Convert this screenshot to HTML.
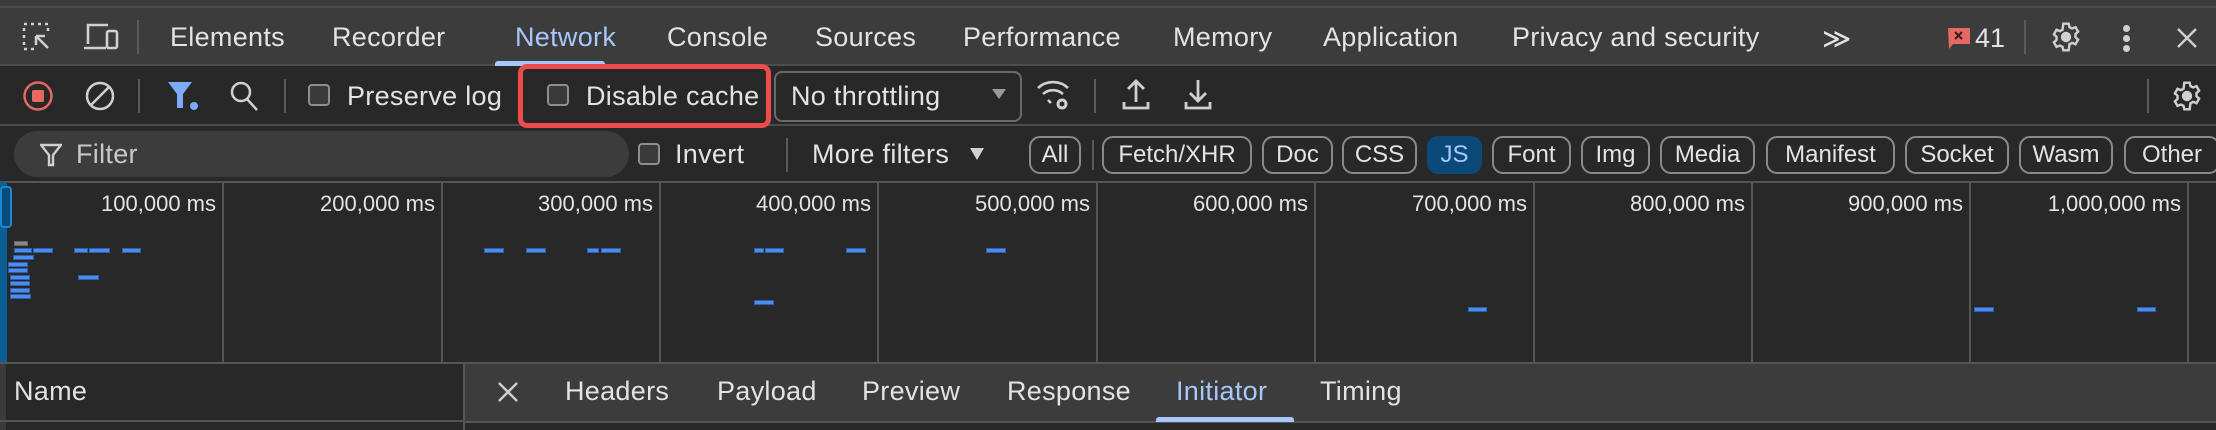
<!DOCTYPE html>
<html><head><meta charset="utf-8"><style>
*{margin:0;padding:0;box-sizing:border-box}
body{width:2216px;height:430px;background:#282828;font-family:"Liberation Sans",Arial,sans-serif;color:#e3e3e3;position:relative;overflow:hidden}
.a{position:absolute;white-space:nowrap}
.t{font-size:27px;top:22px;letter-spacing:0.3px}
.f{font-size:27px;letter-spacing:0.3px}
.cb{position:absolute;width:22px;height:22px;border:2px solid #8e8e8e;border-radius:4px;background:#3a3a3a}
.sep{position:absolute;width:2px;background:#5a5a5a}
.pill{position:absolute;top:136px;height:38px;border:2px solid #8a8a8a;border-radius:11px;font-size:24px;line-height:34px;text-align:center;color:#e3e3e3}
.lab{position:absolute;top:191px;font-size:22px;text-align:right;width:220px}
.g{position:absolute;top:182px;height:181px;width:2px;background:#555}
.b{position:absolute;height:5px;background:#4d8cf0;border:1px solid #2f5fa8}
</style></head><body>
<div class="a" style="left:0;top:0;width:2216px;height:66px;background:#3c3c3c"></div>
<div class="a" style="left:0;top:6px;width:2216px;height:2px;background:#4c4c4c"></div>
<div class="a" style="left:0;top:64px;width:2216px;height:2px;background:#4c4c4c"></div>
<svg class="a" style="left:22px;top:22px" width="32" height="32" viewBox="0 0 32 32" fill="none" stroke="#d0d0d0" stroke-width="2.5"><path d="M2 2h3M9 2h3M16 2h3M23 2h3M2 6v3M2 13v3M2 20v3M26 6v3M2 27h3M9 27h3" /><path d="M14 14l12 12M14 14v9M14 14h9"/></svg>
<svg class="a" style="left:82px;top:22px" width="38" height="30" viewBox="0 0 38 30" fill="none" stroke="#d0d0d0" stroke-width="2.6"><path d="M6 22V3h20M2 26h22"/><rect x="25" y="9" width="10" height="17" rx="2"/></svg>
<div class="sep" style="left:137px;top:20px;height:34px"></div>
<div class="a t" style="left:170px">Elements</div>
<div class="a t" style="left:332px">Recorder</div>
<div class="a t" style="left:515px;color:#a8c7fa">Network</div>
<div class="a" style="left:495px;top:61px;width:110px;height:5px;background:#a8c7fa;border-radius:3px 3px 0 0"></div>
<div class="a t" style="left:667px">Console</div>
<div class="a t" style="left:815px">Sources</div>
<div class="a t" style="left:963px">Performance</div>
<div class="a t" style="left:1173px">Memory</div>
<div class="a t" style="left:1323px">Application</div>
<div class="a t" style="left:1512px">Privacy and security</div>
<div class="a t" style="left:1822px;font-size:28px">&#8811;</div>
<svg class="a" style="left:1948px;top:28px" width="24" height="22" viewBox="0 0 24 22"><path d="M0 0h22v16H5l-4 5z" fill="#e46962"/><path d="M7 4l7 7M14 4l-7 7" stroke="#3a1a1a" stroke-width="2"/></svg>
<div class="a" style="left:1975px;top:23px;font-size:27px">41</div>
<div class="sep" style="left:2024px;top:20px;height:34px"></div>
<svg class="a" style="left:2050px;top:21px" width="32" height="32" viewBox="0 0 24 24" fill="none" stroke="#d0d0d0" stroke-width="1.8"><path d="M10 2h4l.6 2.6 2 1 2.5-1 2 3.4-2 1.8v2.4l2 1.8-2 3.4-2.5-1-2 1L14 22h-4l-.6-2.6-2-1-2.5 1-2-3.4 2-1.8V11.8l-2-1.8 2-3.4 2.5 1 2-1z"/><circle cx="12" cy="12" r="3" fill="#d0d0d0"/></svg>
<div class="a" style="left:2123px;top:25px;width:7px;height:7px;border-radius:4px;background:#d0d0d0"></div>
<div class="a" style="left:2123px;top:35px;width:7px;height:7px;border-radius:4px;background:#d0d0d0"></div>
<div class="a" style="left:2123px;top:45px;width:7px;height:7px;border-radius:4px;background:#d0d0d0"></div>
<svg class="a" style="left:2176px;top:27px" width="22" height="22" viewBox="0 0 22 22" stroke="#d0d0d0" stroke-width="2.4"><path d="M2 2l18 18M20 2L2 20"/></svg>
<div class="a" style="left:0;top:124px;width:2216px;height:2px;background:#4c4c4c"></div>
<svg class="a" style="left:22px;top:80px" width="32" height="32" viewBox="0 0 32 32"><circle cx="16" cy="16" r="13.5" fill="none" stroke="#e46962" stroke-width="2.5"/><rect x="10" y="10" width="12" height="12" rx="1.5" fill="#e46962"/></svg>
<svg class="a" style="left:84px;top:80px" width="32" height="32" viewBox="0 0 32 32" fill="none" stroke="#d0d0d0" stroke-width="2.5"><circle cx="16" cy="16" r="13"/><path d="M7 25L25 7"/></svg>
<div class="sep" style="left:138px;top:79px;height:34px"></div>
<svg class="a" style="left:167px;top:80px" width="34" height="32" viewBox="0 0 34 32"><path d="M1 2h24l-9 12v14h-6V14z" fill="#7cacf8"/><circle cx="27" cy="26" r="4" fill="#7cacf8"/></svg>
<svg class="a" style="left:229px;top:80px" width="30" height="32" viewBox="0 0 30 32" fill="none" stroke="#d0d0d0" stroke-width="2.5"><circle cx="12" cy="12" r="9"/><path d="M18 19l10 11"/></svg>
<div class="sep" style="left:284px;top:79px;height:34px"></div>
<div class="cb" style="left:308px;top:84px"></div>
<div class="a f" style="left:347px;top:81px">Preserve log</div>
<div class="a" style="left:518px;top:64px;width:253px;height:64px;border:5px solid #ee4c4c;border-radius:9px"></div>
<div class="cb" style="left:547px;top:84px"></div>
<div class="a f" style="left:586px;top:81px">Disable cache</div>
<div class="a" style="left:774px;top:71px;width:248px;height:51px;border:2px solid #6a6a6a;border-radius:8px"></div>
<div class="a f" style="left:791px;top:81px">No throttling</div>
<div class="a" style="left:992px;top:89px;width:0;height:0;border-left:7px solid transparent;border-right:7px solid transparent;border-top:10px solid #9a9a9a"></div>
<svg class="a" style="left:1036px;top:78px" width="36" height="34" viewBox="0 0 36 34" fill="none" stroke="#d0d0d0" stroke-width="2.6"><path d="M2 10a22 22 0 0 1 30 0M7 16a15 15 0 0 1 20 0M12 22l3 3"/><circle cx="26" cy="26" r="4" stroke-width="3"/></svg>
<div class="sep" style="left:1094px;top:79px;height:34px"></div>
<svg class="a" style="left:1122px;top:78px" width="28" height="34" viewBox="0 0 28 34" fill="none" stroke="#d0d0d0" stroke-width="2.8"><path d="M14 24V3M6 11l8-8 8 8M2 24v6h24v-6"/></svg>
<svg class="a" style="left:1184px;top:78px" width="28" height="34" viewBox="0 0 28 34" fill="none" stroke="#d0d0d0" stroke-width="2.8"><path d="M14 2v21M6 15l8 8 8-8M2 24v6h24v-6"/></svg>
<div class="sep" style="left:2147px;top:79px;height:34px"></div>
<svg class="a" style="left:2171px;top:80px" width="32" height="32" viewBox="0 0 24 24" fill="none" stroke="#d0d0d0" stroke-width="1.8"><path d="M10 2h4l.6 2.6 2 1 2.5-1 2 3.4-2 1.8v2.4l2 1.8-2 3.4-2.5-1-2 1L14 22h-4l-.6-2.6-2-1-2.5 1-2-3.4 2-1.8V11.8l-2-1.8 2-3.4 2.5 1 2-1z"/><circle cx="12" cy="12" r="3" fill="#d0d0d0"/></svg>
<div class="a" style="left:14px;top:131px;width:615px;height:46px;border-radius:23px;background:#3c3c3c"></div>
<svg class="a" style="left:40px;top:143px" width="22" height="24" viewBox="0 0 22 24" fill="none" stroke="#d0d0d0" stroke-width="2.4"><path d="M1 2h20l-8 10v10h-4V12z"/></svg>
<div class="a f" style="left:76px;top:139px;color:#c8c8c8">Filter</div>
<div class="cb" style="left:638px;top:143px"></div>
<div class="a f" style="left:675px;top:139px">Invert</div>
<div class="sep" style="left:786px;top:138px;height:34px"></div>
<div class="a f" style="left:812px;top:139px">More filters</div>
<div class="a" style="left:970px;top:148px;width:0;height:0;border-left:7px solid transparent;border-right:7px solid transparent;border-top:12px solid #d0d0d0"></div>
<div class="pill" style="left:1029px;width:52px">All</div>
<div class="sep" style="left:1092px;top:140px;height:30px"></div>
<div class="pill" style="left:1102px;width:150px">Fetch/XHR</div>
<div class="pill" style="left:1262px;width:71px">Doc</div>
<div class="pill" style="left:1342px;width:75px">CSS</div>
<div class="pill" style="left:1427px;width:55px;background:#0b4a78;border-color:#0b4a78;color:#a8c7fa">JS</div>
<div class="pill" style="left:1492px;width:79px">Font</div>
<div class="pill" style="left:1581px;width:69px">Img</div>
<div class="pill" style="left:1660px;width:95px">Media</div>
<div class="pill" style="left:1766px;width:129px">Manifest</div>
<div class="pill" style="left:1905px;width:104px">Socket</div>
<div class="pill" style="left:2019px;width:94px">Wasm</div>
<div class="pill" style="left:2124px;width:96px">Other</div>
<div class="a" style="left:0;top:181px;width:2216px;height:2px;background:#555"></div>
<div class="a" style="left:0;top:182px;width:7px;height:181px;background:#0b5f96"></div>
<div class="a" style="left:0;top:186px;width:12px;height:42px;border:2px solid #1a8ad0;border-radius:4px;background:#0b4a78"></div>
<div class="g" style="left:222px"></div><div class="g" style="left:441px"></div><div class="g" style="left:659px"></div><div class="g" style="left:877px"></div><div class="g" style="left:1096px"></div><div class="g" style="left:1314px"></div><div class="g" style="left:1533px"></div><div class="g" style="left:1751px"></div><div class="g" style="left:1969px"></div><div class="g" style="left:2187px"></div>
<div class="lab" style="left:-4px">100,000 ms</div>
<div class="lab" style="left:215px">200,000 ms</div>
<div class="lab" style="left:433px">300,000 ms</div>
<div class="lab" style="left:651px">400,000 ms</div>
<div class="lab" style="left:870px">500,000 ms</div>
<div class="lab" style="left:1088px">600,000 ms</div>
<div class="lab" style="left:1307px">700,000 ms</div>
<div class="lab" style="left:1525px">800,000 ms</div>
<div class="lab" style="left:1743px">900,000 ms</div>
<div class="lab" style="left:1961px">1,000,000 ms</div>
<div class="b" style="left:14px;top:241px;width:14px;background:#888;border-color:#666"></div>
<div class="b" style="left:14px;top:248px;width:18px"></div><div class="b" style="left:33px;top:248px;width:20px"></div>
<div class="b" style="left:74px;top:248px;width:14px"></div><div class="b" style="left:89px;top:248px;width:21px"></div>
<div class="b" style="left:122px;top:248px;width:19px"></div>
<div class="b" style="left:484px;top:248px;width:20px"></div><div class="b" style="left:526px;top:248px;width:20px"></div>
<div class="b" style="left:587px;top:248px;width:12px"></div><div class="b" style="left:601px;top:248px;width:20px"></div>
<div class="b" style="left:754px;top:248px;width:10px"></div><div class="b" style="left:765px;top:248px;width:19px"></div>
<div class="b" style="left:846px;top:248px;width:20px"></div><div class="b" style="left:986px;top:248px;width:20px"></div>
<div class="b" style="left:13px;top:255px;width:21px"></div>
<div class="b" style="left:8px;top:262px;width:20px"></div>
<div class="b" style="left:8px;top:268px;width:20px"></div>
<div class="b" style="left:10px;top:275px;width:20px"></div><div class="b" style="left:78px;top:275px;width:21px"></div>
<div class="b" style="left:10px;top:281px;width:20px"></div>
<div class="b" style="left:10px;top:288px;width:20px"></div>
<div class="b" style="left:10px;top:294px;width:21px"></div>
<div class="b" style="left:754px;top:300px;width:20px"></div>
<div class="b" style="left:1468px;top:307px;width:19px"></div>
<div class="b" style="left:1974px;top:307px;width:20px"></div><div class="b" style="left:2137px;top:307px;width:19px"></div>
<div class="a" style="left:0;top:362px;width:2216px;height:2px;background:#555"></div>
<div class="a" style="left:0;top:364px;width:6px;height:66px;background:#3a3a3a"></div>
<div class="a f" style="left:14px;top:376px">Name</div>
<div class="a" style="left:0;top:420px;width:463px;height:2px;background:#555"></div>
<div class="a" style="left:463px;top:364px;width:1753px;height:58px;background:#3c3c3c"></div>
<div class="a" style="left:463px;top:364px;width:2px;height:66px;background:#555"></div>
<div class="a" style="left:463px;top:421px;width:1753px;height:2px;background:#555"></div>
<svg class="a" style="left:497px;top:381px" width="22" height="22" viewBox="0 0 22 22" stroke="#d0d0d0" stroke-width="2.4"><path d="M2 2l18 18M20 2L2 20"/></svg>
<div class="a f" style="left:565px;top:376px">Headers</div>
<div class="a f" style="left:717px;top:376px">Payload</div>
<div class="a f" style="left:862px;top:376px">Preview</div>
<div class="a f" style="left:1007px;top:376px">Response</div>
<div class="a f" style="left:1176px;top:376px;color:#a8c7fa">Initiator</div>
<div class="a" style="left:1156px;top:417px;width:138px;height:5px;background:#a8c7fa;border-radius:3px 3px 0 0"></div>
<div class="a f" style="left:1320px;top:376px">Timing</div>
</body></html>
